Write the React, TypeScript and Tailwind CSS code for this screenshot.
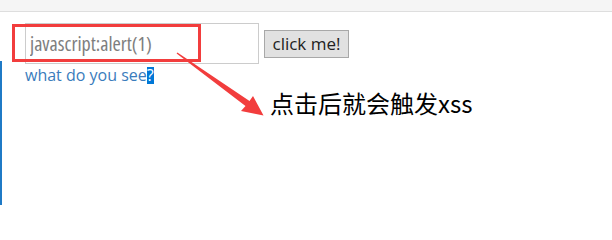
import { useState } from 'react';

const sans = { fontFamily: '"Open Sans", "Noto Sans", sans-serif' };

function Arrow() {
  // tapered red annotation arrow from the input box down to the note
  return (
    <svg className="absolute left-0 top-0 pointer-events-none" width="612" height="205" viewBox="0 0 612 205">
      <polygon
        points="176.6,53.4 177.4,52.6 249.5,101 253,96 263.5,115.5 241,111 245.5,106"
        fill="#f23d3d"
      />
    </svg>
  );
}

export default function App() {
  const [value, setValue] = useState('');

  return (
    <div className="relative w-[612px] h-[205px] overflow-hidden bg-white" style={sans}>
      {/* browser bar */}
      <div className="h-[12px] bg-[#f5f5f5] border-b border-[#dedede]" />

      {/* left edge highlight */}
      <div className="absolute left-0 top-[61px] bottom-0 w-[2px] bg-[#1f7ac6]" />

      <div className="pl-[25px] pt-[11px]">
        <div className="flex items-center gap-[5px]">
          <input
            value={value}
            onChange={(e) => setValue(e.target.value)}
            placeholder="javascript:alert(1)"
            className="w-[234px] h-[41px] border border-[#cccccc] px-[4px] text-[20px] font-stretch-[86%] text-[#555] placeholder:text-[#7e7e7e] outline-none"
            style={sans}
          />
          <button
            className="h-[28px] w-[85px] bg-[#e1e1e1] border border-[#a8a8a8] text-[17px] font-stretch-[96%] text-[#222] leading-none"
            style={sans}
          >
            click me!
          </button>
        </div>
        <a href="#" className="block text-[16px] leading-[22px] text-[#3a7cbc] w-fit">
          what do you see
          <span className="inline-block h-[17px] leading-[17px] bg-[#0078d7] text-white">?</span>
        </a>
      </div>

      {/* annotation */}
      <div className="absolute left-[12px] top-[24px] w-[189px] h-[38px] border-[3px] border-[#f23d3d]" />
      <Arrow />
      <div
        className="absolute left-[270px] top-[90px] text-[24px] leading-[26px] text-black whitespace-nowrap"
        style={{ fontFamily: '"Noto Sans CJK SC", "Noto Sans", sans-serif' }}
      >
        点击后就会触发xss
      </div>
    </div>
  );
}
